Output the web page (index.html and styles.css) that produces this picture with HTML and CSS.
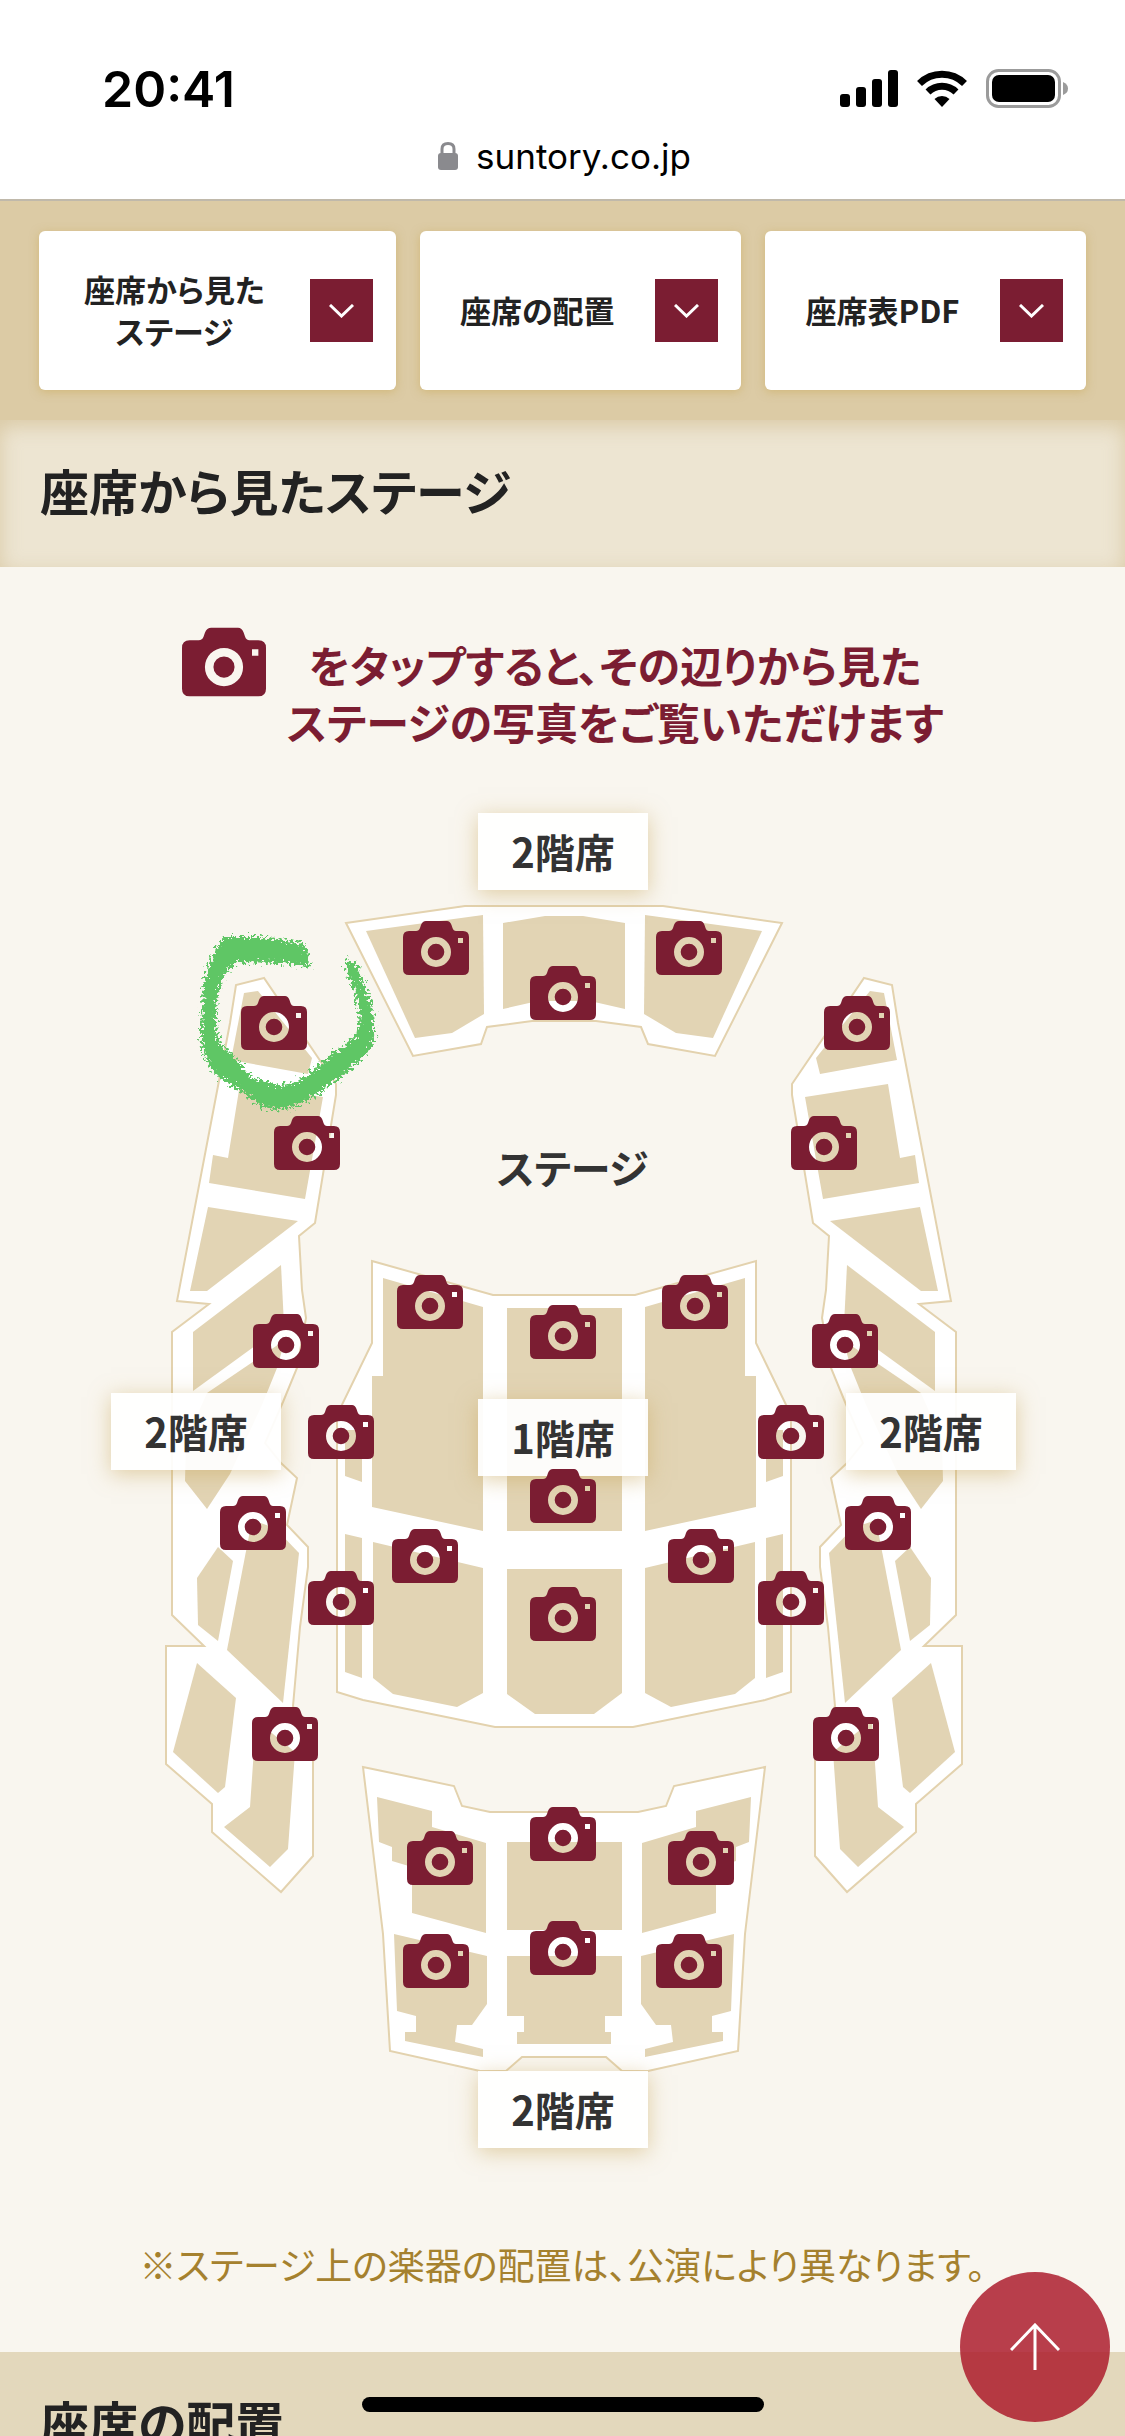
FILE: index.html
```html
<!DOCTYPE html>
<html lang="ja">
<head>
  <meta charset="UTF-8" />
  <meta name="viewport" content="width=device-width, initial-scale=1" />
  <title>座席から見たステージ</title>
  <link rel="stylesheet" href="styles.css">
</head>
<body>
  <svg class="defs" aria-hidden="true">
    <symbol id="camera" viewBox="0 0 66 54">
      <path fill-rule="evenodd" d="M6 10H13Q16 10 17 7L18 4Q19.500 0 23 0H44Q47 0 48.500 4L49.500 7Q50.500 10 53 10H60Q66 10 66 16V48Q66 54 60 54H6Q0 54 0 48V16Q0 10 6 10ZM33 16A15 15 0 1 0 33 46A15 15 0 1 0 33 16ZM33 22.700A8.300 8.300 0 1 1 33 39.300A8.300 8.300 0 1 1 33 22.700ZM55 17V22H60V17Z" />
    </symbol>
    <symbol id="chevron" viewBox="0 0 25 14">
      <path d="M1 1L12.500 12L24 1" fill="none" stroke="#fff" stroke-width="3" />
    </symbol>
  </svg>

  <header class="browser">
    <div class="status">
      <span class="time">20:41</span>
      <div class="status-icons">
        <svg width="58" height="38" viewBox="0 0 58 38">
          <rect x="0" y="24" width="10" height="13" rx="3" />
          <rect x="16" y="17" width="10" height="20" rx="3" />
          <rect x="32" y="9" width="10" height="28" rx="3" />
          <rect x="48" y="0" width="10" height="37" rx="3" />
        </svg>
        <svg width="50" height="38" viewBox="0 0 50 38">
          <g fill="none" stroke="#000" stroke-width="7">
            <path d="M2.500 13.500A32 32 0 0 1 47.500 13.500" />
            <path d="M11 22A20 20 0 0 1 39 22" />
          </g>
          <path d="M17.500 29A11 11 0 0 1 32.500 29L25 37Z" />
        </svg>
        <svg width="83" height="40" viewBox="0 0 83 40">
          <rect x="1.500" y="1.500" width="72" height="36" rx="11" fill="none" stroke="#9b9b9b" stroke-width="3" />
          <rect x="6" y="6" width="63" height="27" rx="7" />
          <path d="M77 13Q82 15 82 19.500T77 26Z" fill="#9b9b9b" />
        </svg>
      </div>
    </div>
    <div class="address">
      <svg width="20" height="28" viewBox="0 0 20 28">
        <rect x="0" y="11" width="20" height="17" rx="3" fill="#8a8a8e" />
        <path d="M4 12V7Q4 1.500 10 1.500T16 7V12" fill="none" stroke="#8a8a8e" stroke-width="3" />
      </svg>
      <span>suntory.co.jp</span>
    </div>
  </header>

  <nav class="anchors">
    <a href="#view">
      <span class="anchor-text">座席から見た<br>ステージ</span>
      <span class="arrow"><svg width="25" height="14"><use href="#chevron" /></svg></span>
    </a>
    <a href="#layout">
      <span class="anchor-text">座席の配置</span>
      <span class="arrow"><svg width="25" height="14"><use href="#chevron" /></svg></span>
    </a>
    <a href="#pdf">
      <span class="anchor-text">座席表PDF</span>
      <span class="arrow"><svg width="25" height="14"><use href="#chevron" /></svg></span>
    </a>
  </nav>

  <main>
    <h2 class="heading heading-shadow" id="view">座席から見たステージ</h2>

    <div class="intro">
      <svg class="intro-icon" width="84" height="70" aria-hidden="true"><use href="#camera" /></svg>
      <p>をタップすると、その辺りから見た<br>ステージの写真をご覧いただけます</p>
    </div>

    <div class="map" id="map">
      <svg class="plan" viewBox="0 780 1125 1400" aria-hidden="true">
        <defs>
          <filter id="crayon" x="-10%" y="-10%" width="120%" height="120%">
            <feTurbulence type="fractalNoise" baseFrequency="0.350" numOctaves="3" seed="4" />
            <feDisplacementMap in="SourceGraphic" scale="16" xChannelSelector="R" yChannelSelector="G" />
          </filter>

          <!-- left wing, upper floor -->
          <g id="wing">
            <path class="floor" d="M264 978L236 985L230 1023L177 1301L209 1304L172 1332V1615L204 1646H166V1764L212 1804V1832L281 1892L313 1856V1752L293 1706L300 1627L308 1567V1547L287 1525L297 1478L281 1463L265 1443L283 1402L297 1368L306 1318L302 1290L299 1236L315 1223L336 1095V1084Z" />
            <path class="seats" d="M244 993L258 991L312 1058L308 1074L231 1060Z" />
            <path class="seats" d="M240 1084L323 1097L305 1199L209 1183L213 1155L228 1158Z" />
            <path class="seats" d="M208 1207L298 1221L207 1291H190Z" />
            <path class="seats" d="M281 1265L284 1325L193 1391V1332Z" />
            <path class="seats" d="M285 1340L207 1393L186 1440L185 1481L207 1509L230 1474L262 1405L277 1368Z" />
            <path class="seats" d="M218 1547L233 1561L218 1641L198 1625L197 1578Z" />
            <path class="seats" d="M252 1520L275 1528L299 1553L283 1703L227 1650Z" />
            <path class="seats" d="M197 1663L236 1698L225 1787L218 1793L173 1752Z" />
            <path class="seats" d="M256 1720L295 1752L288 1849L270 1867L224 1827L250 1807Z" />
          </g>

          <!-- left half of the centre blocks -->
          <g id="half">
            <path class="seats" d="M366 931L483 915L484 1014L452 1033L415 1038Z" />
            <path class="seats" d="M383 1278L483 1307V1531L372 1507V1376H383Z" />
            <path class="seats" d="M345 1430H362V1482L345 1476Z" />
            <path class="seats" d="M345 1534L362 1538V1678L345 1672Z" />
            <path class="seats" d="M373 1542L483 1568V1693L457 1707L393 1694L373 1678Z" />
            <path class="seats" d="M377 1797L432 1811V1827L486 1843V1933L412 1913V1867L392 1861V1847L379 1842Z" />
            <path class="seats" d="M394 1934L487 1956V2004L472 2025H457L455 2042L483 2049V2057L405 2041V2032H416V2016L397 2011Z" />
          </g>
        </defs>

        <use href="#wing" />
        <use href="#wing" transform="translate(1128 0) scale(-1 1)" />

        <path class="floor" d="M346 923L465 906H663L782 923L715 1056L648 1044L641 1027L596 1021H532L487 1027L481 1044L413 1056Z" />
        <path class="floor" d="M372 1261L493 1295H635L756 1261V1343L791 1415V1692L765 1700L633 1727H495L363 1700L337 1692V1415L372 1343Z" />
        <path class="floor" d="M363 1767L454 1786L462 1806L490 1812H638L666 1806L674 1786L765 1767L745 1934L738 2051L648 2071H622L606 2057H522L506 2071H480L390 2051L383 1934Z" />

        <use href="#half" />
        <use href="#half" transform="translate(1128 0) scale(-1 1)" />

        <path class="seats" d="M503 923L545 916H583L625 923V1009L590 1001H538L503 1009Z" />
        <path class="seats" d="M507 1308H622V1531H507Z" />
        <path class="seats" d="M507 1569H622V1693L594 1714H535L507 1694Z" />
        <path class="seats" d="M507 1842H622V1930H507Z" />
        <path class="seats" d="M507 1956H622V2016H605V2032H611V2044H517V2032H524V2016H507Z" />

        <path class="mark" filter="url(#crayon)" d="M346 959L357 965L368 994Q375 1015 374 1029Q375 1045 368 1053L347 1072L317 1095Q300 1107 277 1110L263 1107L237 1089Q213 1074 207 1062Q200 1045 201 1029L203 987L210 960L223 937H260L304 943L311 967L283 963L238 962Q226 970 221 983Q216 1003 216 1012Q215 1033 220 1043L237 1060L253 1078L277 1085Q292 1085 303 1078L330 1056L354 1037Q361 1029 359 1012L354 987L345 969Z" />
      </svg>

      <span class="stage">ステージ</span>
    </div>

    <p class="note">※ステージ上の楽器の配置は、公演により異なります。</p>

    <h2 class="heading" id="layout">座席の配置</h2>
  </main>

  <a class="to-top" href="#" aria-label="ページの先頭へ">
    <svg width="50" height="48" viewBox="0 0 50 48" fill="none" stroke="#fff" stroke-width="3">
      <path d="M25 2V47M1 27L25 2L49 27" />
    </svg>
  </a>
  <div class="home-bar"></div>

  <script>
    const mapWidth = 1125;
    const mapHeight = 1400;
    const map = document.getElementById("map");

    // [x, y] of the top left corner, on the plan
    const labels = [
      ["2階席", 478, 33],
      ["2階席", 111, 613],
      ["1階席", 478, 619],
      ["2階席", 846, 613],
      ["2階席", 478, 1291]
    ];

    const cameras = [
      [403, 141], [530, 186], [656, 141],
      [241, 216], [824, 216], [274, 336], [791, 336],
      [397, 495], [530, 525], [662, 495],
      [253, 534], [812, 534], [308, 625], [758, 625],
      [530, 689], [220, 716], [845, 716],
      [392, 749], [668, 749], [308, 791], [758, 791], [530, 807],
      [252, 927], [813, 927],
      [407, 1051], [530, 1027], [668, 1051],
      [403, 1154], [530, 1141], [656, 1154]
    ];

    function place(element, x, y) {
      element.style.left = `${x / mapWidth * 100}%`;
      element.style.top = `${y / mapHeight * 100}%`;
      map.appendChild(element);
    }

    labels.forEach(([text, x, y]) => {
      const label = document.createElement("span");
      label.className = "label";
      label.textContent = text;
      place(label, x, y);
    });

    cameras.forEach(([x, y], i) => {
      const button = document.createElement("button");
      button.className = "camera";
      button.type = "button";
      button.setAttribute("aria-label", `写真 ${i + 1}`);
      button.innerHTML = '<svg viewBox="0 0 66 54"><use href="#camera" /></svg>';
      place(button, x, y);
    });
  </script>
</body>
</html>
```
FILE: styles.css
```css
* {
  box-sizing: border-box;
}
body {
  margin: 0;
  height: 100vh;
  overflow: hidden;
  font-family: "Noto Sans CJK JP", sans-serif;
  font-feature-settings: "palt";
  background: #f9f6ef;
  color: #222;
}
.defs {
  display: none;
}

/* browser chrome */
.browser {
  height: 201px;
  background: #fff;
  border-bottom: 2px solid #c0b9ab;
  font-family: Inter, sans-serif;
  color: #000;
}
.status {
  display: flex;
  justify-content: space-between;
  align-items: center;
  padding: 59px 56px 0 102px;
}
.time {
  font-size: 50px;
  font-weight: 600;
  line-height: 60px;
}
.status-icons {
  display: flex;
  align-items: center;
  gap: 19px;
}
.address {
  display: flex;
  justify-content: center;
  align-items: center;
  gap: 18px;
  padding: 16px 0 0 4px;
  font-size: 35px;
  line-height: 42px;
}

/* anchor links */
.anchors {
  display: grid;
  grid-template-columns: 10fr 9fr 9fr;
  gap: 24px;
  padding: 30px 39px;
  background: #dccba5;
}
.anchors a {
  display: flex;
  align-items: center;
  height: 159px;
  padding-right: 23px;
  background: #fff;
  border-radius: 6px;
  box-shadow: 0 2px 10px rgba(200, 165, 80, 0.5);
  color: #222;
  text-decoration: none;
}
.anchor-text {
  flex: 1;
  padding-bottom: 2px;
  font-size: 31px;
  font-weight: 700;
  line-height: 42px;
  text-align: center;
}
.arrow {
  display: flex;
  align-items: center;
  justify-content: center;
  width: 63px;
  height: 63px;
  background: #7b1d32;
}

.heading {
  margin: 0;
  padding: 34px 40px 41px;
  font-size: 49px;
  font-weight: 700;
  line-height: 72px;
  background: #e3d8bc;
}
.heading-shadow {
  background: #ede5d2;
  box-shadow: inset 0 6px 20px rgba(210, 190, 145, 0.7);
}

.intro {
  display: flex;
  justify-content: center;
  gap: 21px;
  padding: 60px 20px 30px;
  color: #7b1d32;
}
.intro p {
  margin: 0;
  padding-top: 9px;
  font-size: 43px;
  font-weight: 700;
  line-height: 57px;
  text-align: center;
}
.intro-icon,
.camera svg {
  fill: #7b1d32;
}

/* seat map */
.map {
  position: relative;
}
.plan {
  display: block;
  width: 100%;
}
.floor {
  fill: #fff;
  stroke: #e3d2ae;
  stroke-width: 2;
}
.seats {
  fill: #e2d4b4;
}
.mark {
  fill: #5fc665;
}
.stage,
.label {
  position: absolute;
  font-size: 40px;
  font-weight: 700;
  color: #333;
}
.stage {
  top: 26%;
  left: 0;
  right: 0;
  padding-left: 20px;
  line-height: 46px;
  text-align: center;
}
.label {
  width: 170px;
  background: rgba(255, 255, 255, 0.93);
  box-shadow: 0 4px 20px rgba(200, 165, 90, 0.5);
  line-height: 77px;
  text-align: center;
}
.camera {
  position: absolute;
  width: 66px;
  padding: 0;
  border: 0;
  background: none;
  cursor: pointer;
}
.camera svg {
  display: block;
  width: 100%;
}

.note {
  margin: 0;
  padding: 54px 20px 58px;
  font-size: 37px;
  line-height: 60px;
  text-align: center;
  color: #a5812e;
}

.to-top {
  position: fixed;
  right: 15px;
  bottom: 14px;
  display: flex;
  align-items: center;
  justify-content: center;
  width: 150px;
  height: 150px;
  border-radius: 50%;
  background: rgba(171, 24, 41, 0.83);
}
.home-bar {
  position: fixed;
  left: 0;
  right: 0;
  bottom: 24px;
  width: 402px;
  height: 15px;
  margin: 0 auto;
  border-radius: 8px;
  background: #000;
}
```
